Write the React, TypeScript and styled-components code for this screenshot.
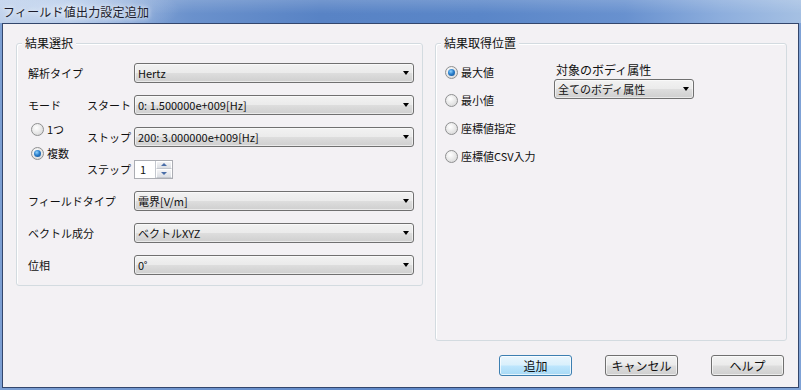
import React from 'react';
import styled, { createGlobalStyle } from 'styled-components';

const GlobalStyle = createGlobalStyle`
  html, body {
    margin: 0;
    padding: 0;
    background: #ffffff;
  }
  body {
    font-family: 'Noto Sans CJK JP', 'Liberation Sans', sans-serif;
    font-size: 11px;
    color: #101010;
  }
`;

const App = () => {
  return (
    <>
      <GlobalStyle />
      <Window>
        <TitleBar>
          <TitleText>フィールド値出力設定追加</TitleText>
        </TitleBar>
        <Client>
          <GroupsRow>
            <Group $width={407}>
              <Legend>結果選択</Legend>
              <LeftGrid>
                <Label $col="1 / 3" $row="1">解析タイプ</Label>
                <Combo $col="3" $row="1">
                  <ComboText>Hertz</ComboText>
                  <Arrow />
                </Combo>

                <ModeColumn>
                  <ModeLabel>モード</ModeLabel>
                  <Radio label="1つ" />
                  <Radio label="複数" checked />
                </ModeColumn>

                <Label $col="2" $row="2">スタート</Label>
                <Combo $col="3" $row="2">
                  <ComboText>0: 1.500000e+009[Hz]</ComboText>
                  <Arrow />
                </Combo>

                <Label $col="2" $row="3">ストップ</Label>
                <Combo $col="3" $row="3">
                  <ComboText>200: 3.000000e+009[Hz]</ComboText>
                  <Arrow />
                </Combo>

                <Label $col="2" $row="4">ステップ</Label>
                <Spin $col="3" $row="4">
                  <SpinValue>1</SpinValue>
                  <SpinButtons>
                    <SpinHalf>
                      <SpinArrow $up />
                    </SpinHalf>
                    <SpinHalf>
                      <SpinArrow />
                    </SpinHalf>
                  </SpinButtons>
                </Spin>

                <Label $col="1 / 3" $row="5">フィールドタイプ</Label>
                <Combo $col="3" $row="5">
                  <ComboText>電界[V/m]</ComboText>
                  <Arrow />
                </Combo>

                <Label $col="1 / 3" $row="6">ベクトル成分</Label>
                <Combo $col="3" $row="6">
                  <ComboText>ベクトルXYZ</ComboText>
                  <Arrow />
                </Combo>

                <Label $col="1 / 3" $row="7">位相</Label>
                <Combo $col="3" $row="7">
                  <ComboText>0˚</ComboText>
                  <Arrow />
                </Combo>
              </LeftGrid>
            </Group>

            <Group $width={352} $height={298}>
              <Legend>結果取得位置</Legend>
              <RightBody>
                <RadioList>
                  <Radio label="最大値" checked />
                  <Radio label="最小値" />
                  <Radio label="座標値指定" />
                  <Radio label="座標値CSV入力" />
                </RadioList>
                <AttrColumn>
                  <AttrLabel>対象のボディ属性</AttrLabel>
                  <Combo $width={140}>
                    <ComboText>全てのボディ属性</ComboText>
                    <Arrow />
                  </Combo>
                </AttrColumn>
              </RightBody>
            </Group>
          </GroupsRow>

          <ButtonRow>
            <Button $default>追加</Button>
            <Button>キャンセル</Button>
            <Button>ヘルプ</Button>
          </ButtonRow>
        </Client>
      </Window>
    </>
  );
};

const Radio = ({ label, checked }: { label: string; checked?: boolean }) => (
  <RadioRow>
    <RadioCircle $checked={checked}>{checked && <RadioDot />}</RadioCircle>
    <span>{label}</span>
  </RadioRow>
);

export default App;

const Window = styled.div`
  width: 801px;
  height: 390px;
  box-sizing: border-box;
  display: flex;
  flex-direction: column;
  background: linear-gradient(90deg, #7c9fd3 0%, #5e88c8 50%, #7fa2d6 100%);
`;

const TitleBar = styled.div`
  height: 23px;
  flex-shrink: 0;
  display: flex;
  align-items: center;
  padding-left: 3px;
  background:
    radial-gradient(ellipse 120px 30px at 60px 10px, rgba(220, 232, 248, 0.75), rgba(220, 232, 248, 0) 100%),
    linear-gradient(180deg, rgba(255, 255, 255, 0.16) 0%, rgba(255, 255, 255, 0) 60%),
    linear-gradient(
      90deg,
      #b4c8e6 0%,
      #8fadda 12%,
      #6a91cc 24%,
      #5883c5 40%,
      #5a86c8 60%,
      #6891cf 78%,
      #8daedd 90%,
      #a5c0e3 100%
    );
`;

const TitleText = styled.span`
  font-size: 12px;
  color: #1c1c2c;
  letter-spacing: 0.2px;
  text-shadow: 0 0 4px rgba(255, 255, 255, 0.9), 0 0 8px rgba(255, 255, 255, 0.6);
`;

const Client = styled.div`
  flex: 1;
  margin: 0 2px 2px 2px;
  border: 1px solid #33466c;
  background: #f3f1f4;
  display: flex;
  flex-direction: column;
  padding: 19px 11px 0 13px;
`;

const GroupsRow = styled.div`
  display: flex;
  align-items: flex-start;
  gap: 12px;
`;

const Group = styled.div<{ $width: number; $height?: number }>`
  position: relative;
  box-sizing: border-box;
  width: ${(p) => p.$width}px;
  ${(p) => (p.$height ? `height: ${p.$height}px;` : '')}
  border: 1px solid #d3dbe0;
  border-radius: 3px;
  box-shadow: inset 1px 1px 0 #ffffff;
`;

const Legend = styled.span`
  position: absolute;
  top: -9px;
  left: 5px;
  padding: 0 3px;
  background: #f3f1f4;
  line-height: 16px;
  font-size: 12px;
`;

const LeftGrid = styled.div`
  display: grid;
  grid-template-columns: 59px 47px 1fr;
  grid-template-rows: repeat(7, 20px);
  row-gap: 12px;
  padding: 19px 8px 10px 11px;
`;

const Label = styled.div<{ $col: string; $row: string }>`
  grid-column: ${(p) => p.$col};
  grid-row: ${(p) => p.$row};
  display: flex;
  align-items: center;
  white-space: nowrap;
`;

const Combo = styled.div<{ $col?: string; $row?: string; $width?: number }>`
  ${(p) => (p.$col ? `grid-column: ${p.$col};` : '')}
  ${(p) => (p.$row ? `grid-row: ${p.$row};` : '')}
  ${(p) => (p.$width ? `width: ${p.$width}px;` : '')}
  box-sizing: border-box;
  height: 20px;
  display: flex;
  align-items: center;
  border: 1px solid #707070;
  border-radius: 3px;
  padding-left: 3px;
  background: linear-gradient(180deg, #f2f2f2 0%, #ebebeb 48%, #dddddd 52%, #cfcfcf 100%);
  box-shadow: inset 0 0 0 1px rgba(255, 255, 255, 0.55);
`;

const ComboText = styled.span`
  flex: 1;
  white-space: nowrap;
  overflow: hidden;
`;

const Arrow = styled.span`
  width: 0;
  height: 0;
  margin-right: 4px;
  border-left: 3.5px solid transparent;
  border-right: 3.5px solid transparent;
  border-top: 4px solid #000000;
`;

const ModeColumn = styled.div`
  grid-column: 1;
  grid-row: 2 / 5;
  display: flex;
  flex-direction: column;
  gap: 4px;
`;

const ModeLabel = styled.div`
  height: 20px;
  display: flex;
  align-items: center;
`;

const RadioRow = styled.div`
  height: 20px;
  display: flex;
  align-items: center;
  gap: 3px;
  padding-left: 3px;
  white-space: nowrap;
`;

const RadioCircle = styled.span<{ $checked?: boolean }>`
  box-sizing: border-box;
  width: 13px;
  height: 13px;
  border-radius: 50%;
  border: 1px solid #8f9091;
  background: radial-gradient(circle at 40% 35%, #ffffff 0%, #e6e6e6 55%, #cfcfcf 100%);
  display: flex;
  align-items: center;
  justify-content: center;
`;

const RadioDot = styled.span`
  width: 7px;
  height: 7px;
  border-radius: 50%;
  background: radial-gradient(circle at 40% 35%, #8fd3ff 0%, #2b7fcc 45%, #0f4a8a 100%);
`;

const Spin = styled.div<{ $col: string; $row: string }>`
  grid-column: ${(p) => p.$col};
  grid-row: ${(p) => p.$row};
  align-self: center;
  box-sizing: border-box;
  width: 39px;
  height: 19px;
  display: flex;
  border: 1px solid #abadb3;
  background: #ffffff;
`;

const SpinValue = styled.span`
  flex: 1;
  display: flex;
  align-items: center;
  padding-left: 5px;
`;

const SpinButtons = styled.div`
  width: 16px;
  display: flex;
  flex-direction: column;
  border-left: 1px solid #c4c8cf;
`;

const SpinHalf = styled.div`
  flex: 1;
  display: flex;
  align-items: center;
  justify-content: center;
  background: linear-gradient(180deg, #f4f4f6 0%, #dcdfe4 100%);
  border: 1px solid #ffffff;
  border-bottom-color: #c4c8cf;
`;

const SpinArrow = styled.span<{ $up?: boolean }>`
  width: 0;
  height: 0;
  border-left: 3px solid transparent;
  border-right: 3px solid transparent;
  ${(p) => (p.$up ? 'border-bottom: 3px solid #4a6ea8;' : 'border-top: 3px solid #4a6ea8;')}
`;

const RightBody = styled.div`
  display: flex;
  padding: 18px 0 0 9px;
`;

const RadioList = styled.div`
  width: 109px;
  display: flex;
  flex-direction: column;
  gap: 8px;
  margin-left: -3px;
`;

const AttrColumn = styled.div`
  display: flex;
  flex-direction: column;
  gap: 1px;
  margin-left: 3px;
`;

const AttrLabel = styled.div`
  line-height: 16px;
  padding-left: 2px;
  font-size: 12px;
`;

const ButtonRow = styled.div`
  display: flex;
  justify-content: flex-end;
  gap: 33px;
  margin-top: 14px;
  padding-right: 3px;
`;

const Button = styled.div<{ $default?: boolean }>`
  box-sizing: border-box;
  width: 73px;
  height: 21px;
  display: flex;
  align-items: center;
  justify-content: center;
  border-radius: 3px;
  font-size: 12px;
  border: 1px solid ${(p) => (p.$default ? '#3c7fb1' : '#707070')};
  background: ${(p) =>
    p.$default
      ? 'linear-gradient(180deg, #eaf6fd 0%, #d9f0fc 48%, #bee6fd 52%, #a7d9f5 100%)'
      : 'linear-gradient(180deg, #f2f2f2 0%, #ebebeb 48%, #dddddd 52%, #cfcfcf 100%)'};
  box-shadow: inset 0 0 0 1px ${(p) => (p.$default ? 'rgba(255, 255, 255, 0.7)' : 'rgba(255, 255, 255, 0.6)')};
`;
